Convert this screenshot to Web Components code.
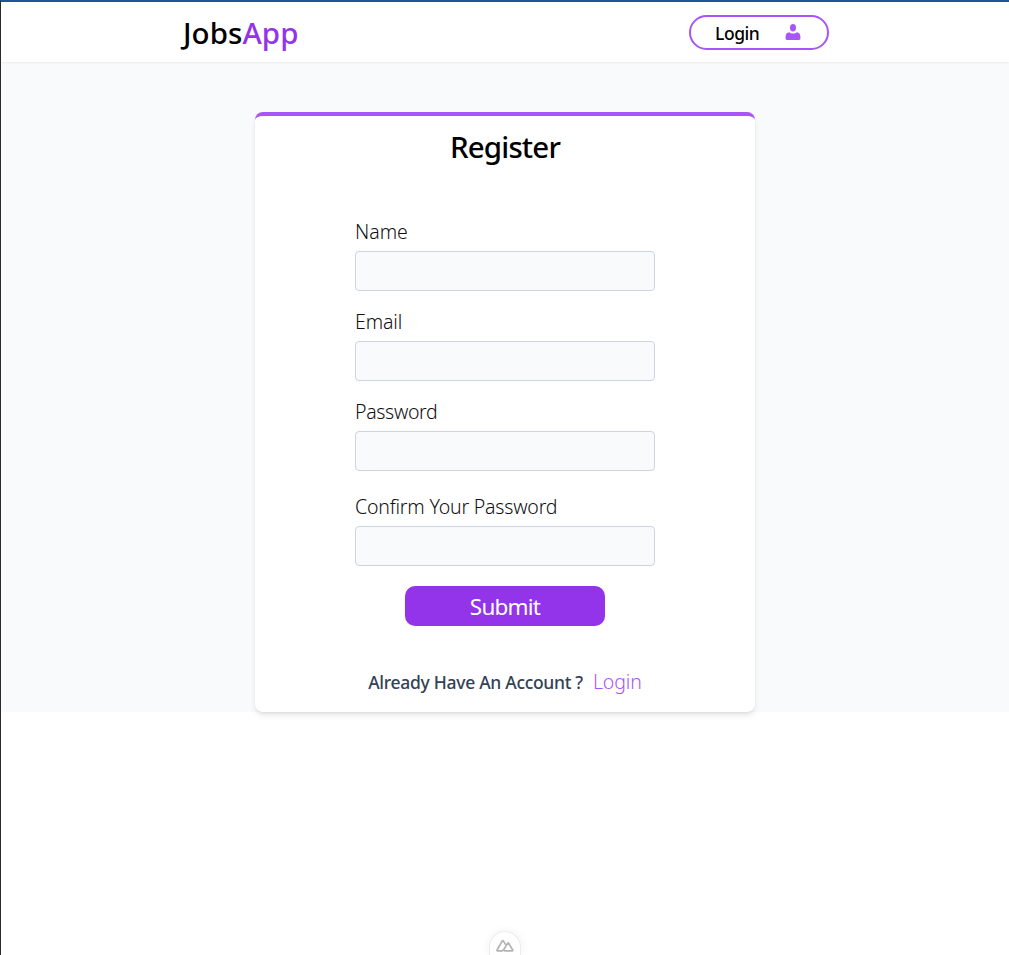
<!DOCTYPE html>
<html lang="en">
<head>
<meta charset="utf-8">
<title>JobsApp</title>
<style>
html,body{margin:0;height:100%;overflow:hidden;background:#fff}
body{font-family:"Noto Sans","Open Sans",sans-serif;color:#000}
</style>
</head>
<body>
<jobs-page>
  <site-header slot="header"></site-header>
  <register-card>
    <form-field label="Name" style="--ls:0px"></form-field>
    <form-field label="Email" style="--ls:-.12px"></form-field>
    <form-field label="Password" style="--ls:-.33px"></form-field>
    <form-field label="Confirm Your Password" style="--ls:-.2px;--gap:25px"></form-field>
  </register-card>
  <devtools-tab slot="footer"></devtools-tab>
</jobs-page>
<script>
class Base extends HTMLElement{
  constructor(){super();this.attachShadow({mode:'open'}).innerHTML=this.view();}
  view(){return '';}
}
customElements.define('jobs-page',class extends Base{view(){return `
<style>
:host{display:flex;flex-direction:column;box-sizing:border-box;height:955px;border-left:1px solid #2b2b2e;border-top:2px solid #1b569c}
main{display:flex;justify-content:center;height:600px;padding-top:50px;background:#f8fafc}
footer{flex:1;display:flex;align-items:flex-end;justify-content:center}
</style><slot name="header"></slot><main><slot></slot></main><footer><slot name="footer"></slot></footer>`}});

customElements.define('site-header',class extends Base{view(){return `
<style>
:host{display:flex;justify-content:space-between;align-items:center;height:60px;padding:0 180px 0 182px;background:#fff;box-shadow:0 1px 2px rgba(0,0,0,.06);z-index:1}
.brand{font-size:29.5px;font-weight:500;line-height:40px;letter-spacing:.05px;margin-top:1px}
.brand span{color:#9333ea}
.login{box-sizing:border-box;display:flex;align-items:center;justify-content:space-between;width:140px;height:35px;border:2px solid #a855f7;border-radius:18px;padding:0 26px 0 24px;margin-top:1px;font-size:17.5px;font-weight:500}
.login span{line-height:24px;letter-spacing:-.45px;margin-top:1px}
svg{display:block;width:16px;height:17px}
</style>
<div class="brand">Jobs<span>App</span></div>
<div class="login"><span>Login</span><svg viewBox="0 0 16 17" fill="#a855f7"><ellipse cx="8" cy="3.7" rx="3" ry="3.7"/><path d="M4.2 8.3C5.500 9.900 10.500 9.900 11.800 8.300c2.3.1 3.6 1.900 3.6 4.300v2c0 .8-.5 1.300-1.300 1.300H1.900c-.8 0-1.300-.5-1.300-1.300v-2c0-2.400 1.300-4.200 3.600-4.300z"/></svg></div>`}});

customElements.define('register-card',class extends Base{view(){return `
<style>
:host{display:flex;flex-direction:column;align-items:center;box-sizing:border-box;width:500px;height:600px;background:#fff;border-top:4px solid #a855f7;border-radius:8px;box-shadow:0 4px 6px -1px rgba(0,0,0,.1),0 2px 4px -2px rgba(0,0,0,.1)}
h1{margin:11px 0 0;height:41px;font-size:29.500px;line-height:40px;font-weight:500;letter-spacing:-.85px}
form{display:flex;flex-direction:column;align-items:center;width:300px;padding-top:33px}
button{width:200px;height:40px;margin-top:20px;border:0;border-radius:10px;background:#9333ea;color:#fff;font:400 22.500px/40px "Noto Sans",sans-serif;padding:1px 0 0;letter-spacing:-.8px}
p{display:flex;gap:10px;margin:42px 0 0;line-height:28px;color:#334155;font-size:17.500px;font-weight:500;letter-spacing:-.3px}
a{color:#a855f7;font-size:19.500px;font-weight:350;letter-spacing:-.1px}
</style>
<h1>Register</h1>
<form><slot></slot><button type="button">Submit</button></form>
<p><span>Already Have An Account ?</span><a>Login</a></p>`}});

customElements.define('form-field',class extends Base{
view(){return `
<style>
:host{display:block;width:300px;padding-top:var(--gap,20px)}
label{display:block;height:31px;margin-top:-1px;line-height:24px;font-size:19.500px;font-weight:350;color:#111;letter-spacing:var(--ls,0)}
input{display:block;box-sizing:border-box;width:300px;height:40px;border:1px solid #cbd5e1;border-radius:4px;background:#f8fafc;padding:0 10px;outline:0}
</style><label></label><input>`}
connectedCallback(){this.shadowRoot.querySelector('label').textContent=this.getAttribute('label');}
});

customElements.define('devtools-tab',class extends Base{view(){return `
<style>
:host{display:flex;justify-content:center;box-sizing:border-box;width:32px;height:24px;border:1px solid #ececec;border-bottom:0;border-radius:16px 16px 0 0;background:#fff;box-shadow:0 0 10px rgba(0,0,0,.06);padding-top:7px}
svg{display:block;width:18px;height:13px}
</style>
<svg viewBox="0 0 18 13" fill="none" stroke="#b4b4b4" stroke-width="1.700" stroke-linejoin="round" stroke-linecap="round"><path d="M5.500 11.800H1.600Q.7 11.800 1.100 11L6.200 2Q6.800 1.100 7.400 2L9.200 5.200"/><path d="M5.500 11.800Q7.300 11.800 8.200 10L11.600 4.200Q12.100 3.500 12.600 4.200L16.700 11Q17.100 11.800 16.200 11.800H8.700"/></svg>`}});
</script>
</body>
</html>
